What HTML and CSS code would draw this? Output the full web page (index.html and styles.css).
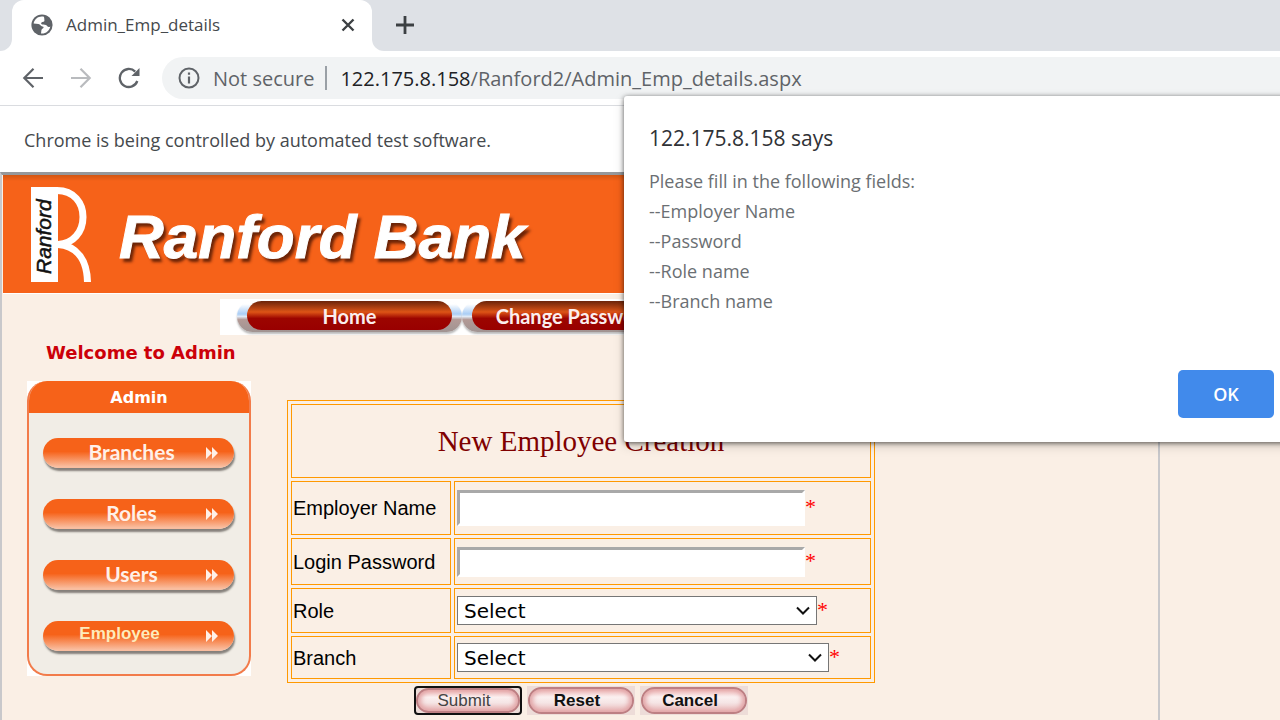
FILE: index.html
```html
<!DOCTYPE html>
<html lang="en">
<head>
<meta charset="utf-8">
<title>Admin_Emp_details</title>
<link rel="stylesheet" href="styles.css">
</head>
<body>
<header class="browser">
  <div class="tabstrip">
    <span class="strip-start"></span>
    <div class="tab-slot">
      <div class="tab">
        <svg class="globe" viewBox="0 0 22 22" aria-hidden="true"><circle cx="11" cy="11" r="10.6" fill="#5f6368"/><path d="M12.5 2.6C8 1.600 3.500 4.500 2.600 9.500L7.500 10c2 .2 2 2.500 4 2.400 1.500 0 1.400 1.600.2 2.100-1.700.6-1.200 2.500-1.700 4.900 4.200.7 8.500-2.400 9.300-7-1.600.9-2.800.6-3.600-.9-.7-1.300-2.900-.8-4.600-1.100-1.400-.3-1.300-2.300.3-2.500 1.600-.2 2.300-.6 2-2-.2-1.200.1-2.300-.900-3.300z" fill="#fff"/></svg>
        <span class="tab-title">Admin_Emp_details</span>
        <button class="icon-button close" type="button" aria-label="Close tab"><svg viewBox="0 0 14 14"><path d="M1.500 1.500l11 11M12.500 1.500l-11 11" stroke="#3c4043" stroke-width="2.400"/></svg></button>
      </div>
    </div>
    <div class="strip-end">
      <button class="icon-button add" type="button" aria-label="New tab"><svg viewBox="0 0 20 20"><path d="M10 1v18M1 10h18" stroke="#3c4043" stroke-width="2.800"/></svg></button>
    </div>
  </div>
  <div class="toolbar">
    <button class="icon-button nav-button" type="button" aria-label="Back"><svg viewBox="0 0 22 22" fill="none" stroke="#5f6368" stroke-width="2.200"><path d="M21 11H2.500M11.500 1.800L2.300 11l9.200 9.200"/></svg></button>
    <button class="icon-button nav-button" type="button" aria-label="Forward"><svg viewBox="0 0 22 22" fill="none" stroke="#b9bbbe" stroke-width="2.200"><path d="M1 11h18.500M10.500 1.800l9.200 9.200-9.200 9.200"/></svg></button>
    <button class="icon-button nav-button" type="button" aria-label="Reload"><svg viewBox="0 0 22 22"><path d="M19.300 14A9 9 0 1 1 17.200 4.600" fill="none" stroke="#5f6368" stroke-width="2.300"/><path d="M21.500 1v8h-8z" fill="#5f6368"/></svg></button>
    <div class="address">
      <svg class="info" viewBox="0 0 22 22" aria-hidden="true"><circle cx="11" cy="11" r="9.500" fill="none" stroke="#5f6368" stroke-width="2"/><path d="M11 9.500v7M11 5.500v2.300" stroke="#5f6368" stroke-width="2.200"/></svg>
      <span class="secure">Not secure</span>
      <span class="divider"></span>
      <span class="url"><b>122.175.8.158</b>/Ranford2/Admin_Emp_details.aspx</span>
    </div>
  </div>
  <div class="infobar">Chrome is being controlled by automated test software.</div>
</header>

<div class="page">
  <div class="banner">
    <svg class="logo" viewBox="0 0 61 95" role="img" aria-label="Ranford">
      <rect width="27" height="95" fill="#fff"/>
      <path d="M26 3.500C43 3.500 52 16 52 30C52 45 42 57 27 57.500C46 59 56 73 56.500 95" fill="none" stroke="#fff" stroke-width="7"/>
      <text class="logo-text" x="-87" y="20" transform="rotate(-90)">Ranford</text>
    </svg>
    <span class="brand">Ranford Bank</span>
  </div>
  <nav class="menu">
    <a class="menu-item" href="#"><span class="menu-pill">Home</span></a>
    <a class="menu-item" href="#"><span class="menu-pill">Change Password</span></a>
  </nav>
  <p class="welcome">Welcome to Admin</p>
  <div class="content">
    <aside class="side-back">
      <div class="side">
        <h2 class="side-title">Admin</h2>
        <div class="side-list">
          <a class="side-link" href="#">Branches<svg class="chevrons" viewBox="0 0 14 12"><path d="M1 0l6 6-6 6zM7 0l6 6-6 6z"/></svg></a>
          <a class="side-link" href="#">Roles<svg class="chevrons" viewBox="0 0 14 12"><path d="M1 0l6 6-6 6zM7 0l6 6-6 6z"/></svg></a>
          <a class="side-link" href="#">Users<svg class="chevrons" viewBox="0 0 14 12"><path d="M1 0l6 6-6 6zM7 0l6 6-6 6z"/></svg></a>
          <a class="side-link current" href="#">Employee<svg class="chevrons" viewBox="0 0 14 12"><path d="M1 0l6 6-6 6zM7 0l6 6-6 6z"/></svg></a>
        </div>
      </div>
    </aside>
    <form class="employee">
      <table class="fields">
        <tr class="row-title"><th colspan="2">New Employee Creation</th></tr>
        <tr class="row-name"><td class="label"><label for="name">Employer Name</label></td><td><input class="text tall" id="name" type="text"><span class="required">*</span></td></tr>
        <tr class="row-password"><td class="label"><label for="password">Login Password</label></td><td><input class="text" id="password" type="password"><span class="required">*</span></td></tr>
        <tr class="row-role"><td class="label"><label for="role">Role</label></td><td><span class="picker"><select id="role"><option>Select</option></select><svg class="caret" viewBox="0 0 14 9"><path d="M1 1.500l6 6 6-6"/></svg></span><span class="required">*</span></td></tr>
        <tr class="row-branch"><td class="label"><label for="branch">Branch</label></td><td><span class="picker wide"><select id="branch"><option>Select</option></select><svg class="caret" viewBox="0 0 14 9"><path d="M1 1.500l6 6 6-6"/></svg></span><span class="required">*</span></td></tr>
      </table>
      <div class="actions">
        <button class="action submit" type="button"><span>Submit</span></button>
        <button class="action" type="button"><span>Reset</span></button>
        <button class="action" type="button"><span>Cancel</span></button>
      </div>
    </form>
  </div>
</div>

<div class="dialog" role="dialog" aria-labelledby="says">
  <h1 class="dialog-title" id="says">122.175.8.158 says</h1>
  <p class="dialog-text">Please fill in the following fields:<br>--Employer Name<br>--Password<br>--Role name<br>--Branch name</p>
  <div class="dialog-actions"><button class="ok" type="button">OK</button></div>
</div>
</body>
</html>
```

FILE: styles.css
```css
* { box-sizing: border-box; }
body {
  display: flex;
  flex-direction: column;
  margin: 0;
  height: 100vh;
  overflow: hidden;
  position: relative;
  background: #faefe5;
  font-family: "Open Sans", "Noto Sans", sans-serif;
}
button { font: inherit; cursor: pointer; }
a { text-decoration: none; }

/* Browser frame */
.browser { flex: none; background: #fff; }
.tabstrip { display: flex; height: 51px; }
.strip-start { width: 12px; background: #dee1e6; border-bottom-right-radius: 12px; }
.tab-slot { width: 360px; background: linear-gradient(#dee1e6 50%, #fff 50%); }
.tab {
  display: flex;
  align-items: center;
  height: 100%;
  padding: 0 17px 2px 19px;
  background: #fff;
  border-radius: 12px 12px 0 0;
}
.globe { width: 22px; height: 22px; margin-right: 13px; }
.tab-title { flex: 1; font-size: 17px; color: #45494d; }
.icon-button { display: flex; padding: 0; border: 0; background: none; }
.close svg { width: 14px; height: 14px; }
.add svg { width: 20px; height: 20px; }
.strip-end {
  flex: 1;
  display: flex;
  align-items: center;
  padding: 0 0 2px 23px;
  background: #dee1e6;
  border-bottom-left-radius: 12px;
}
.toolbar {
  display: flex;
  align-items: center;
  gap: 26px;
  height: 55px;
  padding-left: 22px;
  border-bottom: 1px solid #dadce0;
}
.nav-button svg { width: 22px; height: 22px; }
.address {
  flex: 1;
  display: flex;
  align-items: center;
  height: 42px;
  margin-left: -4px;
  padding-left: 16px;
  background: #f1f3f4;
  border-radius: 21px 0 0 21px;
  font-size: 20px;
  color: #5f6368;
  white-space: nowrap;
}
.info { width: 22px; height: 22px; margin-right: 13px; }
.divider { width: 2px; height: 24px; margin: 0 13px 0 11px; background: #9aa0a6; }
.url b { font-weight: 400; color: #202124; }
.infobar {
  display: flex;
  align-items: center;
  height: 66px;
  padding: 2px 0 0 24px;
  font-size: 18px;
  color: #45494d;
}

/* Bank page */
.page {
  flex: 1;
  min-height: 0;
  margin-right: 120px;
  padding-left: 1px;
  border: solid #c8c8cb;
  border-width: 3px 2px 0;
  border-top-color: #96989b;
}
.banner {
  display: flex;
  align-items: center;
  gap: 27px;
  height: 118px;
  padding-left: 28px;
  background: linear-gradient(#d25612, #f66219 6px);
  box-shadow: 0 1px #fff;
}
.logo { width: 61px; height: 95px; }
.logo-text { font: italic 21px "Liberation Sans", Arial, sans-serif; fill: #111; stroke: #111; stroke-width: .5px; }
.brand {
  padding-top: 6px;
  font: italic bold 62px/72px "Liberation Sans", Arial, sans-serif;
  color: #fff;
  -webkit-text-stroke: 1px #fff;
  text-shadow: 3px 4px 3px rgba(60, 15, 0, .75);
}
.menu {
  display: flex;
  height: 36px;
  margin: 6px 0 0 217px;
  padding: 2px 0 3px 17px;
  background: #fff;
}
.menu-item {
  width: 225px;
  padding: 0 10px;
  border-radius: 16px;
  background: linear-gradient(#fff 10%, #a9cdf5 42%, #dfe9f5 50%, #b39a96 60%, #a09492);
  box-shadow: 0 2px 2px #bbb;
}
.menu-pill {
  display: flex;
  align-items: center;
  justify-content: center;
  height: 29px;
  border-radius: 15px;
  background: linear-gradient(#6b240a, #dd5416 38%, #9c0500 60%, #990000);
  color: #fbeeee;
  font: bold 20px/28px Lato, sans-serif;
  white-space: nowrap;
}
.welcome {
  margin: 0;
  padding: 7px 0 0 43px;
  font: bold 18px/22px Verdana, "DejaVu Sans", sans-serif;
  color: #cc0009;
}
.content { display: flex; align-items: flex-start; gap: 36px; padding: 17px 0 0 24px; }
.side-back { width: 224px; background: #fff; }
.side {
  border: 2px solid #f27b4a;
  border-top: 0;
  border-radius: 20px;
  background: #f1ede6;
  overflow: hidden;
}
.side-title {
  margin: 0 -2px;
  padding-top: 2px;
  background: #f66219;
  color: #fff;
  text-align: center;
  font: bold 16px/30px Verdana, "DejaVu Sans", sans-serif;
}
.side-list { display: flex; flex-direction: column; gap: 31px; padding: 25px 15px 23px 14px; }
.side-link {
  display: flex;
  align-items: center;
  justify-content: center;
  position: relative;
  height: 30px;
  padding: 0 16px 2px 2px;
  border-radius: 15px;
  background: linear-gradient(#f66219 45%, #f9bd9f 95%);
  box-shadow: 1px 3px 2px #85807b;
  color: #fff0e8;
  font: bold 21px/28px Lato, sans-serif;
}
.chevrons { position: absolute; right: 15px; top: 9px; width: 14px; height: 12px; fill: #fff0e8; }
.current {
  padding: 0 40px 4px 2px;
  color: #fdebbb;
  font: bold 17px/26px "Liberation Sans", Arial, sans-serif;
}

/* Employee form */
.employee { width: 588px; padding-top: 19px; }
.fields {
  width: 100%;
  border: 1px solid #ff9900;
  border-collapse: separate;
  border-spacing: 3px;
}
.fields th, .fields td { padding: 0 2px; border: 1px solid #ff9900; }
.fields th { font: 29px "Liberation Serif", "Times New Roman", serif; color: #800000; }
.fields td { font: 20px/24px "Liberation Serif", "Times New Roman", serif; white-space: nowrap; }
.fields td.label { padding-left: 1px; font-family: "Liberation Sans", Arial, sans-serif; }
.label { width: 160px; }
.row-title { height: 74px; }
.row-name { height: 54px; }
.row-password { height: 47px; }
.row-role { height: 45px; }
.row-branch { height: 43px; }
.text {
  width: 348px;
  height: 30px;
  padding: 2px;
  border: 3px solid #fff;
  border-color: #a9a9a9 #fff #fff #a9a9a9;
  border-radius: 0;
  background: #fff;
  font: 20px "Liberation Sans", Arial, sans-serif;
  vertical-align: middle;
}
.tall { height: 36px; }
.required { display: inline-block; font-size: 22px; line-height: 24px; padding-bottom: 2px; vertical-align: middle; color: #f00; }
.picker { display: inline-block; position: relative; width: 360px; height: 29px; vertical-align: middle; }
.picker.wide { width: 372px; }
.picker select {
  appearance: none;
  display: block;
  width: 100%;
  height: 100%;
  padding: 0 6px;
  border: 1px solid #767676;
  border-radius: 0;
  background: #fff;
  color: #000;
  font: 20px Verdana, "DejaVu Sans", sans-serif;
}
.caret { position: absolute; right: 7px; top: 10px; width: 14px; height: 9px; fill: none; stroke: #111; stroke-width: 2; pointer-events: none; }
.actions { display: flex; justify-content: center; gap: 5px; padding-top: 3px; }
.action {
  width: 108px;
  height: 29px;
  padding: 1px;
  border: 0;
  background: #eddcd8;
  color: #111;
  font: bold 17px/22px "Liberation Sans", Arial, sans-serif;
}
.action span {
  display: flex;
  align-items: center;
  justify-content: center;
  height: 100%;
  padding-right: 8px;
  border: 2px solid #bd7f83;
  border-radius: 14px;
  background: linear-gradient(#edb5b5, #fbf0f0 35%, #f5e5e5 60%, #e8b4b5);
  box-shadow: inset 3px 0 5px #e2a5a7, inset -3px 0 5px #e2a5a7;
}
.submit { border: 2px solid #101010; border-radius: 4px; padding: 0; font-weight: 400; color: #444; }

/* Alert */
.dialog {
  position: absolute;
  top: 96px;
  left: 624px;
  right: -18px;
  padding: 24px 24px 24px 25px;
  background: #fff;
  border-radius: 3px;
  box-shadow: 0 1px 5px rgba(0, 0, 0, .6), 0 4px 12px rgba(0, 0, 0, .15);
}
.dialog-title { margin: 0; font-size: 21px; line-height: 36px; font-weight: 400; color: #303236; }
.dialog-text { margin: 10px 0 0; font-size: 18px; line-height: 30px; color: #6b6f73; }
.dialog-actions { display: flex; justify-content: flex-end; padding-top: 54px; }
.ok { width: 96px; height: 48px; border: 0; border-radius: 5px; background: #418aeb; color: #fff; font-size: 18px; font-weight: 600; }
```
